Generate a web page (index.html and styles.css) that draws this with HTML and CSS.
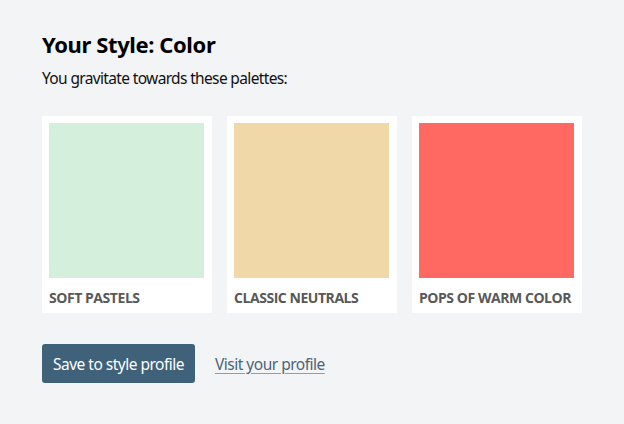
FILE: index.html
```html
<!DOCTYPE html>
<html lang="en">
<head>
    <meta charset="UTF-8">
    <title>Your Style: Color</title>
    <link rel="stylesheet" href="styles.css">
</head>
<body>
    <div class="result">
        <h1>Your Style: Color</h1>
        <p class="intro">You gravitate towards these palettes:</p>

        <div class="palettes">
            <div class="palette">
                <div class="swatch swatch-pastel"></div>
                <span class="palette-name">Soft Pastels</span>
            </div>
            <div class="palette">
                <div class="swatch swatch-neutral"></div>
                <span class="palette-name">Classic Neutrals</span>
            </div>
            <div class="palette">
                <div class="swatch swatch-warm"></div>
                <span class="palette-name">Pops of Warm Color</span>
            </div>
        </div>

        <div class="actions">
            <button class="save-button">Save to style profile</button>
            <a href="#" class="profile-link">Visit your profile</a>
        </div>
    </div>
</body>
</html>
```

FILE: styles.css
```css
body {
    margin: 0;
    background: #f3f4f6;
    font-family: 'Noto Sans', 'Open Sans', sans-serif;
    color: #111;
}

.result {
    padding: 29px 42px;
}

h1 {
    font-size: 22px;
    font-weight: 700;
    letter-spacing: -0.4px;
    margin: 0 0 8px;
    line-height: 30px;
    color: #000;
}

.intro {
    font-size: 15.5px;
    letter-spacing: -0.65px;
    margin: 0 0 27px;
    line-height: 22px;
}

.palettes {
    display: flex;
    gap: 15px;
}

.palette {
    width: 170px;
    background: #fff;
    padding: 7px 7px 0;
    box-sizing: border-box;
    height: 197px;
}

.swatch {
    width: 155px;
    height: 155px;
}

.swatch-pastel {
    background: #d4f0dc;
}

.swatch-neutral {
    background: #f0d8a8;
}

.swatch-warm {
    background: #ff6961;
}

.palette-name {
    display: block;
    font-family: 'Open Sans', sans-serif;
    font-weight: 700;
    font-size: 14px;
    line-height: 20px;
    text-transform: uppercase;
    letter-spacing: -0.45px;
    color: #585858;
    margin-top: 10px;
}

.actions {
    display: flex;
    align-items: center;
    gap: 20px;
    margin-top: 31px;
}

.save-button {
    background: #3f6179;
    color: #fff;
    border: none;
    border-radius: 3px;
    font-family: 'Noto Sans', 'Open Sans', sans-serif;
    font-size: 15.5px;
    letter-spacing: -0.5px;
    white-space: nowrap;
    padding: 0;
    height: 39px;
    width: 153px;
    cursor: pointer;
}

.profile-link {
    color: #4a6478;
    font-size: 15.5px;
    letter-spacing: -0.5px;
    text-decoration: underline;
    text-decoration-color: #8aa0b0;
    text-underline-offset: 3px;
}
```
